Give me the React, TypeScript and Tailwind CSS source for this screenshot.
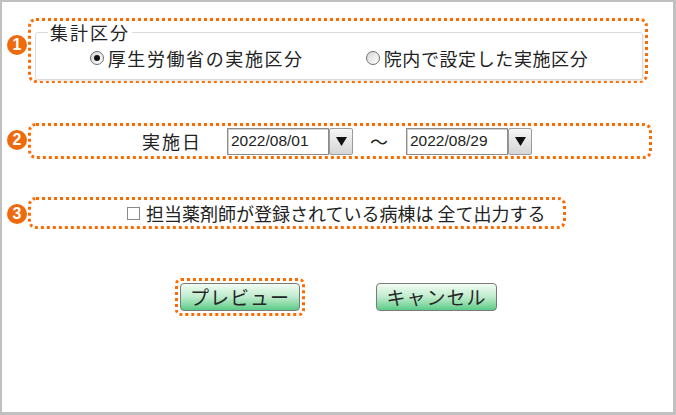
import React from "react";

const jp = "font-['Noto_Sans_CJK_JP','Noto_Sans',sans-serif]";

function Badge({ n, className }: { n: string; className: string }) {
  return (
    <div
      className={`flex h-[20px] w-[20px] shrink-0 items-center justify-center rounded-full bg-[#ee6a0c] font-['Liberation_Sans',sans-serif] text-[16px] font-bold leading-none text-white ${className}`}
    >
      {n}
    </div>
  );
}

function Radio({ checked }: { checked?: boolean }) {
  return (
    <span className="flex h-[14px] w-[14px] shrink-0 items-center justify-center rounded-full border border-[#6f6f6f] bg-gradient-to-br from-[#d6d6d6] to-white">
      {checked && <span className="h-[6px] w-[6px] rounded-full bg-[#111]" />}
    </span>
  );
}

function DateField({ value }: { value: string }) {
  return (
    <div className="flex">
      <div className="flex h-[27px] w-[102px] items-center border border-[#8c8c8c] bg-white pl-[3px] font-['Liberation_Sans',sans-serif] text-[15.5px] text-[#222] shadow-[inset_1px_1px_0_#d0d0d0]">
        {value}
      </div>
      <div className="flex h-[27px] w-[24px] items-center justify-center rounded-[2px] border border-[#9a9a9a] bg-gradient-to-b from-[#f6f6f6] to-[#d6d6d6]">
        <svg width="11" height="9" viewBox="0 0 11 9">
          <polygon points="0,0 11,0 5.5,9" fill="#111" />
        </svg>
      </div>
    </div>
  );
}

const greenBtn =
  "flex h-[28px] items-center justify-center rounded-[4px] border border-[#7a7a7a] bg-gradient-to-b from-[#f2fcf4] via-[#bdebcc] to-[#58cc88] text-[19px] text-[#262626]";

export default function App() {
  return (
    <div
      className={`h-[415px] w-[676px] border-t-2 border-r-[3px] border-b-[3px] border-l-2 border-[#c0c0c0] bg-white text-[#222] ${jp}`}
    >
      {/* 1: 集計区分 */}
      <div className="mt-[16px] flex items-start pl-[5px]">
        <Badge n="1" className="mt-[17px]" />
        <div className="ml-[1px] h-[65px] w-[620px] rounded-[8px] border-[3px] border-dotted border-[#ff6a00] pt-[1px] pr-[2px] pl-[4px]">
          <fieldset className="h-[58px] rounded-[3px] border border-[#dadada] pl-[12px] shadow-[1px_1px_1px_#eeeeee]">
            <legend className="px-[2px] text-[18px] leading-[20px] tracking-[2px]">集計区分</legend>
            <div className="flex h-[32px] items-center justify-center gap-[62px] pr-[12px] text-[18px] leading-none">
              <label className="flex items-center gap-[4px] tracking-[1.6px]">
                <Radio checked />
                厚生労働省の実施区分
              </label>
              <label className="flex items-center gap-[4px] tracking-[0.6px]">
                <Radio />
                院内で設定した実施区分
              </label>
            </div>
          </fieldset>
        </div>
      </div>

      {/* 2: 実施日 */}
      <div className="mt-[40px] flex items-start pl-[5px]">
        <Badge n="2" className="mt-[7px]" />
        <div className="ml-[1px] flex h-[36px] w-[624px] items-center rounded-[8px] border-[3px] border-dotted border-[#ff6a00] pl-[111px]">
          <span className="text-[18px] leading-none tracking-[2px]">実施日</span>
          <div className="ml-[25px]">
            <DateField value="2022/08/01" />
          </div>
          <span className="ml-[17px] text-[18px] leading-none">～</span>
          <div className="ml-[18px]">
            <DateField value="2022/08/29" />
          </div>
        </div>
      </div>

      {/* 3: 全て出力 */}
      <div className="mt-[38px] flex items-start pl-[5px]">
        <Badge n="3" className="mt-[7px]" />
        <div className="ml-[1px] flex h-[32px] w-[538px] items-center rounded-[8px] border-[3px] border-dotted border-[#ff6a00] pl-[96px]">
          <span className="h-[13px] w-[13px] border border-[#8a8a8a] bg-white" />
          <span className="ml-[6px] text-[18px] leading-none">担当薬剤師が登録されている病棟は 全て出力する</span>
        </div>
      </div>

      {/* buttons */}
      <div className="mt-[49px] flex items-center pl-[173px]">
        <div className="rounded-[6px] border-[3px] border-dotted border-[#ff6a00] p-[2px]">
          <button className={`${greenBtn} w-[120px] tracking-[1px]`}>プレビュー</button>
        </div>
        <button className={`${greenBtn} ml-[71px] w-[121px] tracking-[1px]`}>キャンセル</button>
      </div>
    </div>
  );
}
